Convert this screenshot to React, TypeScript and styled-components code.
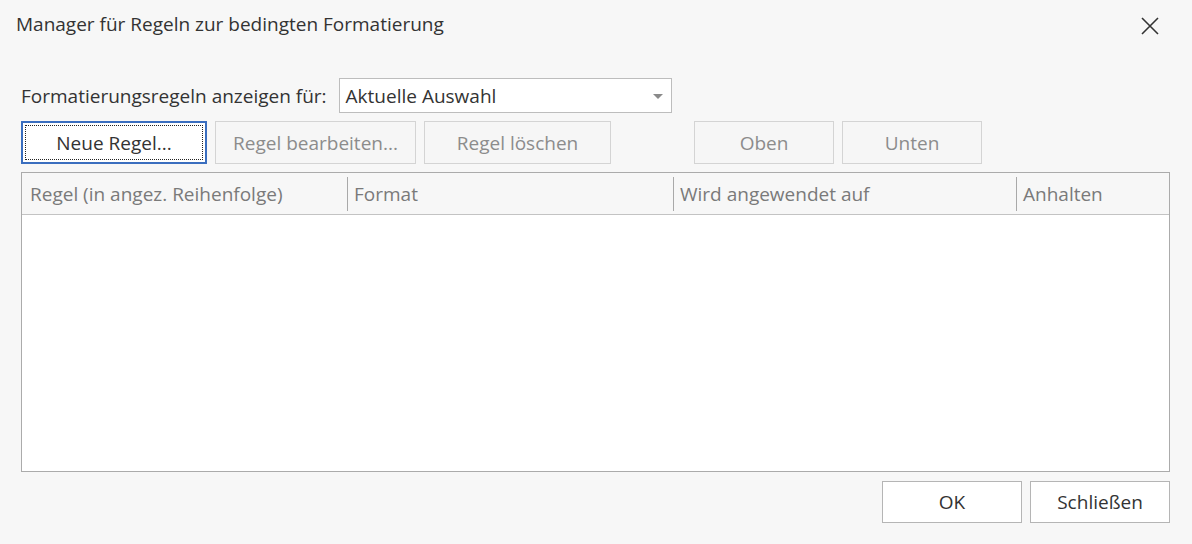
import React from "react";
import styled, { createGlobalStyle } from "styled-components";

// --- Global ---
const GlobalStyle = createGlobalStyle`
  html, body {
    margin: 0;
    padding: 0;
    background: #f7f7f7;
  }
  body {
    font-family: "Open Sans", "Noto Sans", Arial, sans-serif;
    font-size: 19px;
    color: #3b3b3b;
  }
  * {
    box-sizing: border-box;
  }
`;

// --- Layout ---
const Dialog = styled.div`
  width: 1192px;
  height: 544px;
  display: flex;
  flex-direction: column;
  padding: 0 22px 0 21px;
  background: #f7f7f7;
`;

const TitleBar = styled.div`
  height: 78px;
  display: flex;
  align-items: flex-start;
  justify-content: space-between;
  padding: 10px 9px 0 0;
  margin-left: -5px;
`;

const Title = styled.div`
  font-size: 19px;
  line-height: 28px;
  color: #333;
`;

const CloseButton = styled.button`
  width: 22px;
  height: 22px;
  padding: 0;
  margin-top: 5px;
  border: none;
  background: transparent;
  display: flex;
  align-items: center;
  justify-content: center;
  cursor: pointer;
`;

const FilterRow = styled.div`
  display: flex;
  align-items: center;
  gap: 12px;
  height: 35px;
`;

const Label = styled.span`
  color: #333;
  white-space: nowrap;
`;

const Combo = styled.div`
  width: 333px;
  height: 35px;
  background: #fff;
  border: 1px solid #bdbdbd;
  display: flex;
  align-items: center;
  justify-content: space-between;
  padding: 0 8px 0 6px;
  color: #333;
`;

const ComboArrow = styled.span`
  width: 0;
  height: 0;
  border-left: 5px solid transparent;
  border-right: 5px solid transparent;
  border-top: 5px solid #8a8a8a;
  margin-top: 2px;
`;

const ButtonRow = styled.div`
  display: flex;
  gap: 8px;
  margin-top: 8px;
  height: 43px;
`;

const Spacer = styled.div<{ $w: number }>`
  width: ${(p) => p.$w}px;
  flex: none;
`;

const ToolButton = styled.button<{ $w: number; $primary?: boolean }>`
  width: ${(p) => p.$w}px;
  height: 43px;
  flex: none;
  font: inherit;
  font-size: 19px;
  position: relative;
  cursor: default;
  background: ${(p) => (p.$primary ? "#fff" : "#f6f6f6")};
  border: ${(p) => (p.$primary ? "2px solid #3a6ebf" : "1px solid #d4d4d4")};
  color: ${(p) => (p.$primary ? "#333" : "#8c8c8c")};
  padding: 0;

  ${(p) =>
    p.$primary &&
    `
    &::after {
      content: "";
      position: absolute;
      inset: 2px;
      border: 1px dotted #222;
    }
  `}
`;

const Table = styled.div`
  margin-top: 8px;
  height: 300px;
  border: 1px solid #ababab;
  display: flex;
  flex-direction: column;
  background: #fff;
`;

const HeaderRow = styled.div`
  height: 42px;
  display: flex;
  align-items: center;
  background: #f7f7f7;
  border-bottom: 1px solid #c3c3c3;
  flex: none;
`;

const HeaderCell = styled.div<{ $w: number; $sep?: boolean }>`
  width: ${(p) => p.$w}px;
  flex: none;
  height: 34px;
  display: flex;
  align-items: center;
  padding-left: ${(p) => (p.$sep ? 6 : 8)}px;
  border-left: ${(p) => (p.$sep ? "1px solid #a9a9a9" : "none")};
  color: #7a7a7a;
  white-space: nowrap;
`;

const TableBody = styled.div`
  flex: 1;
  background: #fff;
`;

const Footer = styled.div`
  display: flex;
  justify-content: flex-end;
  gap: 8px;
  margin-top: 9px;
`;

const FooterButton = styled.button`
  width: 140px;
  height: 42px;
  font: inherit;
  font-size: 19px;
  background: #fff;
  border: 1px solid #b5b5b5;
  color: #333;
  padding: 0;
  cursor: default;
`;

// --- Component ---
const columns = [
  { label: "Regel (in angez. Reihenfolge)", w: 325 },
  { label: "Format", w: 326 },
  { label: "Wird angewendet auf", w: 343 },
  { label: "Anhalten", w: 153 },
];

function App() {
  return (
    <>
      <GlobalStyle />
      <Dialog>
        <TitleBar>
          <Title>Manager für Regeln zur bedingten Formatierung</Title>
          <CloseButton aria-label="Schließen">
            <svg width="20" height="20" viewBox="0 0 20 20">
              <path
                d="M2 2 L18 18 M18 2 L2 18"
                stroke="#333"
                strokeWidth="1.6"
                fill="none"
              />
            </svg>
          </CloseButton>
        </TitleBar>

        <FilterRow>
          <Label>Formatierungsregeln anzeigen für:</Label>
          <Combo>
            <span>Aktuelle Auswahl</span>
            <ComboArrow />
          </Combo>
        </FilterRow>

        <ButtonRow>
          <ToolButton $w={186} $primary>
            Neue Regel...
          </ToolButton>
          <ToolButton $w={201}>Regel bearbeiten...</ToolButton>
          <ToolButton $w={187}>Regel löschen</ToolButton>
          <Spacer $w={67} />
          <ToolButton $w={140}>Oben</ToolButton>
          <ToolButton $w={140}>Unten</ToolButton>
        </ButtonRow>

        <Table>
          <HeaderRow>
            {columns.map((c, i) => (
              <HeaderCell key={c.label} $w={c.w} $sep={i > 0}>
                {c.label}
              </HeaderCell>
            ))}
          </HeaderRow>
          <TableBody />
        </Table>

        <Footer>
          <FooterButton>OK</FooterButton>
          <FooterButton>Schließen</FooterButton>
        </Footer>
      </Dialog>
    </>
  );
}

export default App;
